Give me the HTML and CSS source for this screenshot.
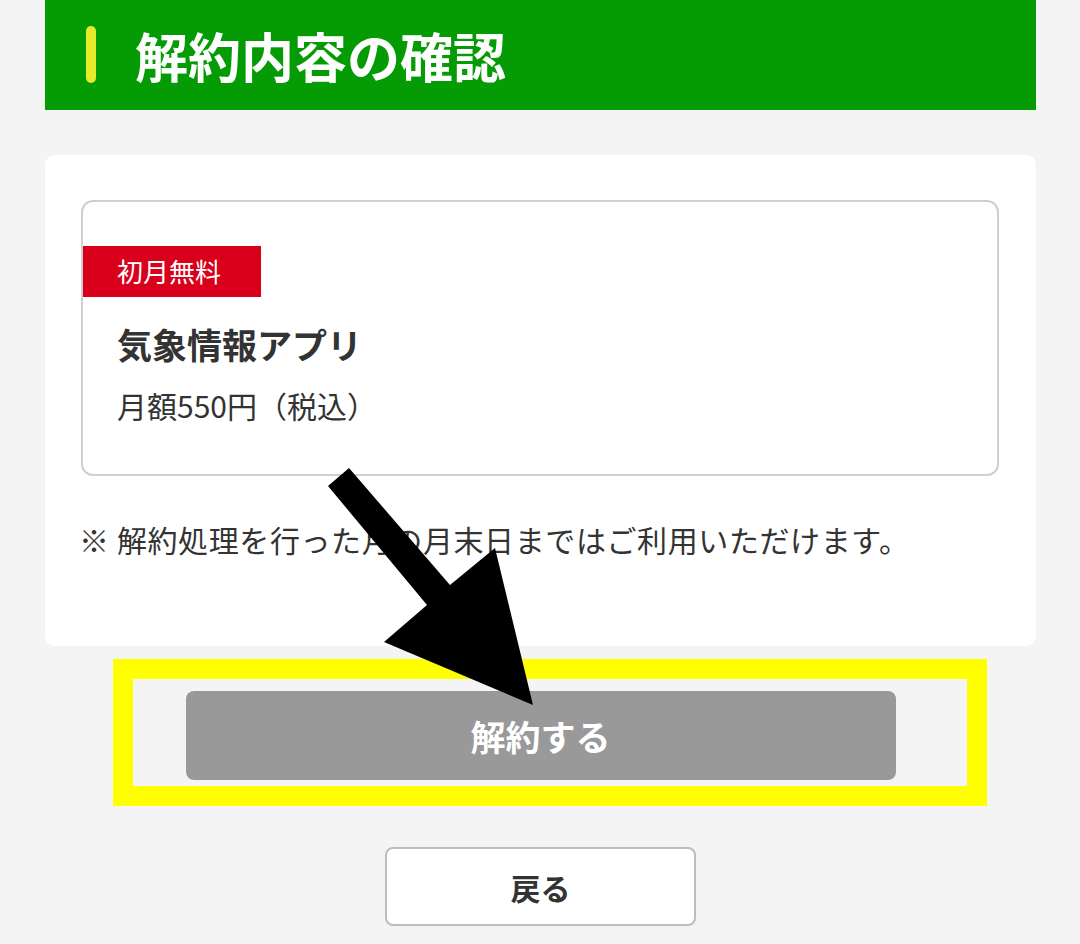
FILE: index.html
```html
<!DOCTYPE html>
<html lang="ja">
<head>
<meta charset="utf-8">
<title>解約内容の確認</title>
<link rel="stylesheet" href="styles.css">
</head>
<body>
<div class="page">
  <header class="head">
    <span class="head-bar"></span>
    <h1 class="head-title">解約内容の確認</h1>
  </header>
  <section class="card">
    <div class="plan">
      <div class="badge">初月無料</div>
      <div class="plan-name">気象情報アプリ</div>
      <div class="plan-price">月額550円（税込）</div>
    </div>
    <p class="note">※ 解約処理を行った月の月末日まではご利用いただけます。</p>
  </section>
  <div class="actions">
    <button class="btn-cancel">解約する</button>
    <button class="btn-back">戻る</button>
  </div>
</div>
<div class="highlight"></div>
<svg class="arrow" viewBox="0 0 1080 944" width="1080" height="944">
  <polygon points="328,486 349,468 450,585 495,548 533,705 384,642 427,605" fill="#000"/>
</svg>
</body>
</html>
```
FILE: styles.css
```css
html, body {
  margin: 0;
  padding: 0;
}
body {
  background: #f4f4f4;
  font-family: "Noto Sans CJK JP", "Noto Sans", sans-serif;
  color: #333;
  width: 1080px;
  height: 944px;
  overflow: hidden;
  position: relative;
}
.page {
  width: 991px;
  margin-left: 45px;
}
.head {
  height: 110px;
  background: #049b04;
  display: flex;
  align-items: center;
}
.head-bar {
  width: 10px;
  height: 57px;
  border-radius: 5px;
  background: #e6ea2a;
  margin-left: 41px;
  margin-top: -1px;
}
.head-title {
  margin: 0 0 0 39px;
  color: #fff;
  font-size: 53px;
  font-weight: 700;
  line-height: 1;
  letter-spacing: 0;
}
.card {
  margin-top: 45px;
  background: #fff;
  border-radius: 10px;
  padding: 45px 37px 85px 36px;
}
.plan {
  border: 2px solid #cfcfcf;
  border-radius: 12px;
  padding: 44px 0 49px 0;
}
.badge {
  width: 144px;
  height: 51px;
  line-height: 50px;
  padding-left: 34px;
  background: #d9001b;
  color: #fff;
  font-size: 26px;
}
.plan-name {
  margin: 22px 0 0 34px;
  font-size: 35px;
  font-weight: 700;
  line-height: 50px;
  color: #333;
}
.plan-price {
  margin: 16px 0 0 34px;
  font-size: 30px;
  line-height: 40px;
  color: #333;
}
.note {
  margin: 41px 0 0 -2px;
  font-size: 30px;
  line-height: 44px;
  letter-spacing: 0.6px;
  color: #333;
  white-space: nowrap;
}
.actions {
  display: flex;
  flex-direction: column;
  align-items: center;
}
.btn-cancel {
  margin-top: 45px;
  width: 710px;
  height: 89px;
  border: none;
  border-radius: 8px;
  background: #999;
  color: #fff;
  font-family: inherit;
  font-size: 35px;
  font-weight: 700;
  padding: 0;
}
.btn-back {
  margin-top: 67px;
  width: 311px;
  height: 79px;
  border: 2px solid #bdbdbd;
  border-radius: 8px;
  background: #fff;
  color: #333;
  font-family: inherit;
  font-size: 30px;
  font-weight: 700;
  padding: 0;
}
.highlight {
  position: absolute;
  left: 113px;
  top: 659px;
  width: 874px;
  height: 147px;
  box-sizing: border-box;
  border: 20px solid #ffff00;
}
.arrow {
  position: absolute;
  left: 0;
  top: 0;
}
```
